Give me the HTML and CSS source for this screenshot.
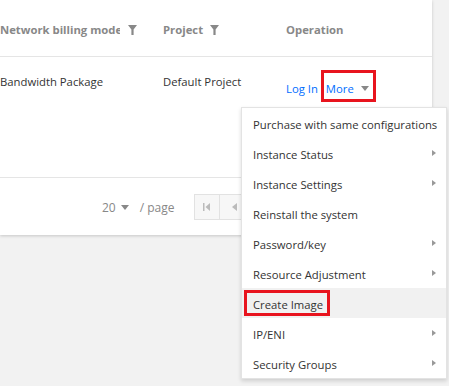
FILE: index.html
```html
<!DOCTYPE html>
<html>
<head>
<meta charset="utf-8">
<link rel="stylesheet" href="styles.css">
</head>
<body>
<div class="panel">
  <div class="row head">
    <div class="cell c1"><span class="htext clip">Network billing mode</span><svg class="filter" width="9" height="10" viewBox="0 0 9 10"><path d="M0 0H9L5.6 4.6V10H3.4V4.6Z" fill="#888"/></svg></div>
    <div class="cell c2"><span class="htext">Project</span><svg class="filter" width="9" height="10" viewBox="0 0 9 10"><path d="M0 0H9L5.6 4.6V10H3.4V4.6Z" fill="#888"/></svg></div>
    <div class="cell c3"><span class="htext">Operation</span></div>
  </div>
  <div class="row body">
    <div class="cell c1">Bandwidth Package</div>
    <div class="cell c2">Default Project</div>
    <div class="cell c3 ops"><a class="link">Log In</a><a class="link more">More<svg class="caret" width="8" height="5" viewBox="0 0 8 5"><path d="M0 0H8L4 5Z" fill="#888"/></svg></a></div>
  </div>
  <div class="pager">
    <span class="size">20<svg class="caret2" width="8" height="5" viewBox="0 0 8 5"><path d="M0 0H8L4 5Z" fill="#888"/></svg></span>
    <span class="per">/ page</span>
    <div class="btns">
      <span class="pbtn"><svg width="7" height="8" viewBox="0 0 7 8"><rect x="0" y="0" width="1.5" height="8" fill="#bbb"/><path d="M7 0V8L2.5 4Z" fill="#bbb"/></svg></span>
      <span class="pbtn"><svg width="5" height="8" viewBox="0 0 5 8"><path d="M5 0V8L0 4Z" fill="#bbb"/></svg></span>
    </div>
  </div>
</div>

<ul class="menu">
  <li class="item">Purchase with same configurations</li>
  <li class="item sub">Instance Status</li>
  <li class="item sub">Instance Settings</li>
  <li class="item">Reinstall the system</li>
  <li class="item sub">Password/key</li>
  <li class="item sub">Resource Adjustment</li>
  <li class="item hover">Create Image</li>
  <li class="item sub">IP/ENI</li>
  <li class="item sub">Security Groups</li>
</ul>

<div class="mark mark-more"></div>
<div class="mark mark-image"></div>
</body>
</html>
```

FILE: styles.css
```css
html, body {
  margin: 0;
  padding: 0;
}
body {
  width: 449px;
  height: 386px;
  background: #f2f2f2;
  font-family: "Open Sans", "Noto Sans", sans-serif;
  font-size: 11.3px;
  color: #333;
  position: relative;
  overflow: hidden;
}
.panel {
  width: 432px;
  height: 235px;
  background: #fff;
  box-shadow: 0 1px 3px rgba(0,0,0,0.18);
  display: flex;
  flex-direction: column;
}
.row {
  display: flex;
}
.cell {
  box-sizing: border-box;
  display: flex;
  align-items: center;
}
.c1 { width: 163px; }
.c2 { width: 123px; }
.c3 { flex: 1; }
.head {
  height: 57px;
  border-bottom: 1px solid #e5e5e5;
  box-sizing: border-box;
}
.head .cell {
  padding-top: 3px;
}
.htext {
  font-weight: bold;
  color: #888;
  white-space: nowrap;
}
.clip {
  display: inline-block;
  width: 120px;
  overflow: hidden;
}
.filter {
  margin-left: 8px;
  flex: none;
}
.c2 .filter { margin-left: 7px; }
.body {
  height: 121px;
  border-bottom: 1px solid #e5e5e5;
  box-sizing: border-box;
  align-items: flex-start;
}
.body .cell {
  padding-top: 17px;
}
.body .ops {
  padding-top: 24px;
}
.link {
  color: #006eff;
}
.more {
  margin-left: 8px;
  display: inline-flex;
  align-items: center;
}
.caret {
  margin-left: 7px;
}
.pager {
  flex: 1;
  display: flex;
  align-items: center;
  padding-left: 102px;
  padding-top: 2px;
  color: #888;
  font-size: 12px;
}
.size {
  display: inline-flex;
  align-items: center;
}
.caret2 {
  margin-left: 5px;
}
.per {
  margin-left: 11px;
}
.btns {
  display: flex;
  margin-left: 19px;
  margin-top: -2px;
}
.pbtn {
  width: 24px;
  height: 24px;
  border: 1px solid #e2e2e2;
  background: #f7f7f7;
  display: flex;
  align-items: center;
  justify-content: center;
}
.pbtn + .pbtn {
  border-left: none;
  width: 30px;
}
.menu {
  position: absolute;
  left: 241px;
  top: 107px;
  width: 206px;
  margin: 0;
  padding: 0;
  list-style: none;
  background: #fff;
  border: 1px solid #e3e3e3;
  box-sizing: border-box;
  box-shadow: 0 2px 4px rgba(0,0,0,0.15);
}
.item {
  height: 27px;
  line-height: 27px;
  padding-top: 3px;
  padding-left: 11px;
  color: #333;
  white-space: nowrap;
  position: relative;
}
.item.sub::after {
  content: "";
  position: absolute;
  right: 10px;
  top: 12px;
  border-left: 4px solid #999;
  border-top: 3.5px solid transparent;
  border-bottom: 3.5px solid transparent;
}
.item.hover {
  background: #f1f1f1;
}
.mark {
  position: absolute;
  border: 3px solid #e8141e;
  box-sizing: border-box;
}
.mark-more {
  left: 321px;
  top: 70px;
  width: 55px;
  height: 32px;
}
.mark-image {
  left: 244px;
  top: 290px;
  width: 86px;
  height: 26px;
}
```
